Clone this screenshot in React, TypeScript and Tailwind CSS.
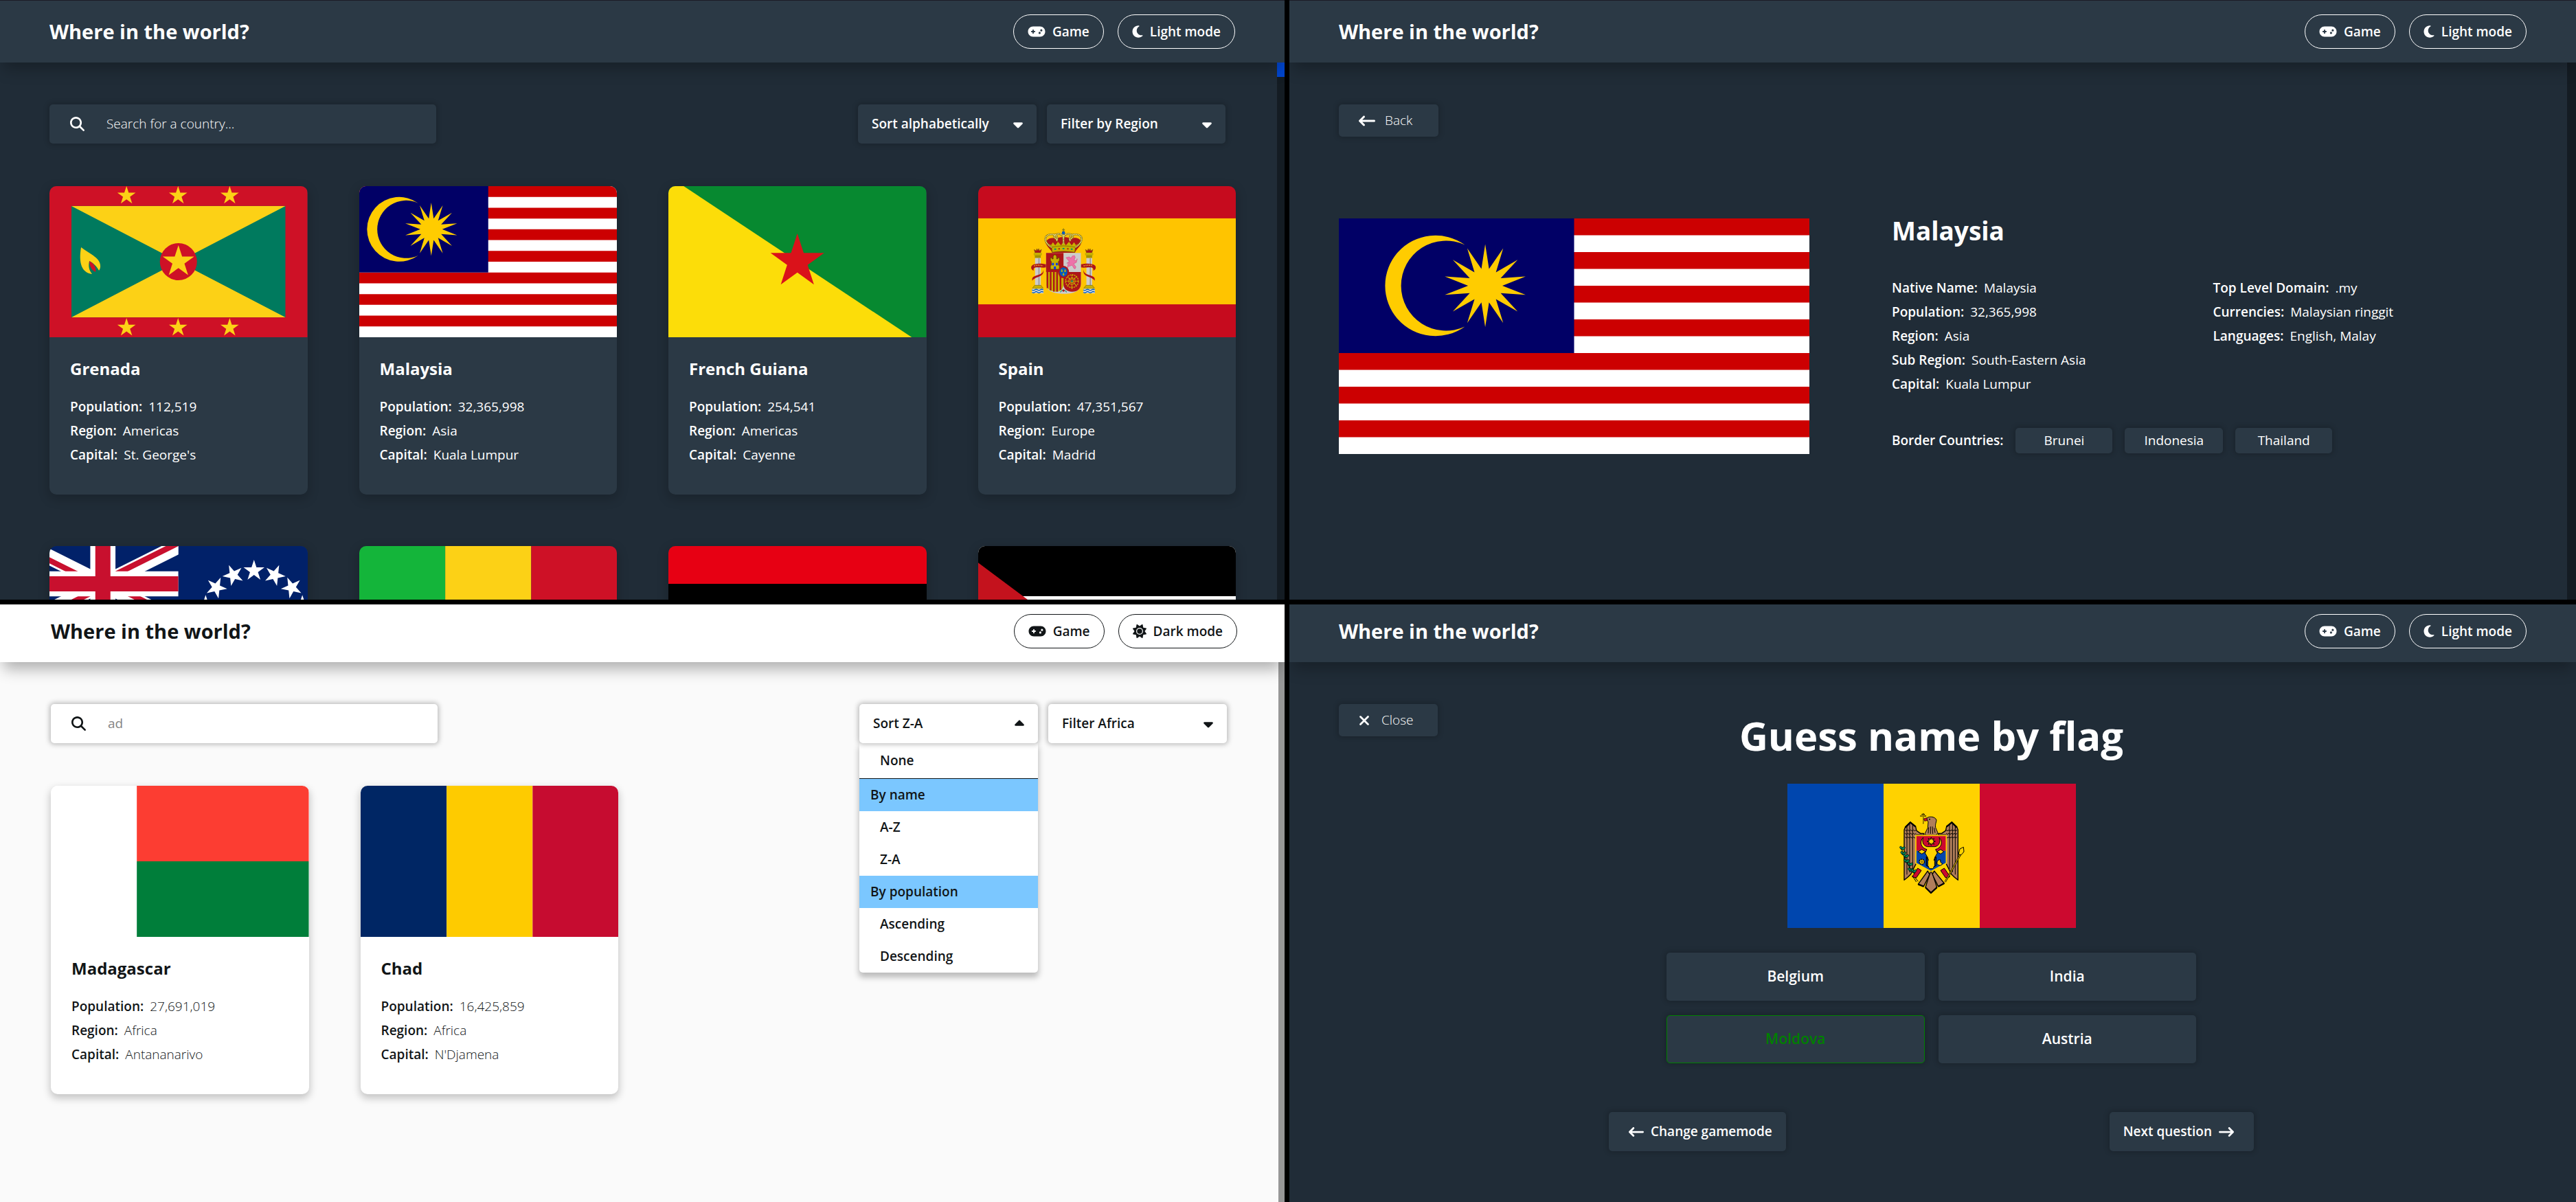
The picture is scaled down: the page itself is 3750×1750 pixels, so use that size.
import type { ReactNode } from "react";
import {
  FaArrowLeftLong,
  FaArrowRightLong,
  FaCaretDown,
  FaCaretUp,
  FaGamepad,
  FaMagnifyingGlass,
  FaMoon,
  FaSun,
  FaXmark,
} from "react-icons/fa6";

/* ---------- geometry helpers ---------- */

function starPoints(cx: number, cy: number, outer: number, inner: number, tips = 5, turn = 0) {
  const pts: string[] = [];
  for (let i = 0; i < tips * 2; i++) {
    const r = i % 2 === 0 ? outer : inner;
    const a = (Math.PI * i) / tips - Math.PI / 2 + (turn * Math.PI) / 180;
    pts.push(`${(cx + r * Math.cos(a)).toFixed(2)},${(cy + r * Math.sin(a)).toFixed(2)}`);
  }
  return pts.join(" ");
}

function Star({ x, y, r, turn = 0, fill }: { x: number; y: number; r: number; turn?: number; fill: string }) {
  return <polygon points={starPoints(x, y, r, r * 0.382, 5, turn)} fill={fill} />;
}

function Flag({ box, label, className, children }: { box: string; label: string; className: string; children: ReactNode }) {
  return (
    <svg viewBox={box} preserveAspectRatio="xMidYMid slice" role="img" aria-label={`Flag of ${label}`} className={className}>
      {children}
    </svg>
  );
}

/* ---------- flags ---------- */

type FlagProps = { className: string };

function Grenada({ className }: FlagProps) {
  return (
    <Flag box="0 0 375 220" label="Grenada" className={className}>
      <rect width="375" height="220" fill="#ce1126" />
      <rect x="32" y="29" width="311" height="162" fill="#007a5e" />
      <path d="M32 29H343L32 191H343Z" fill="#fcd116" />
      <circle cx="187.500" cy="110" r="27" fill="#ce1126" />
      <Star x={187.5} y={110} r={24} fill="#fcd116" />
      {[112, 187, 262].map((x) => (
        <g key={x}>
          <Star x={x} y={14} r={14} fill="#fcd116" />
          <Star x={x} y={206} r={14} fill="#fcd116" />
        </g>
      ))}
      <path d="M46 89C56 97 74 104 74 116C74 120 73 121 72 123C69 117 64 112 58 109C56 117 58 123 62 128C47 126 42 112 46 89Z" fill="#fcd116" />
      <path d="M58 109C66 113 68 120 67 125C62 123 58 117 58 109Z" fill="#ce1126" />
    </Flag>
  );
}

function Malaysia({ className }: FlagProps) {
  return (
    <Flag box="0 0 440 220" label="Malaysia" className={className}>
      <rect width="440" height="220" fill="#fff" />
      <path
        d="M0 7.86H440M0 39.29H440M0 70.71H440M0 102.14H440M0 133.57H440M0 165H440M0 196.43H440"
        stroke="#cc0001"
        strokeWidth="15.71"
      />
      <rect width="220" height="125.710" fill="#010066" />
      <path d="M118 24.700A47 47 0 1 0 118 101A42 42 0 1 1 118 24.700Z" fill="#fc0" />
      <polygon points={starPoints(137, 62.8, 38.7, 16, 14)} fill="#fc0" />
    </Flag>
  );
}

function FrenchGuiana({ className }: FlagProps) {
  return (
    <Flag box="0 0 375 220" label="French Guiana" className={className}>
      <rect width="375" height="220" fill="#078930" />
      <path d="M0 0H22L354 220H0Z" fill="#fcdd09" />
      <Star x={187.5} y={110} r={41} fill="#da121a" />
    </Flag>
  );
}

function Pillar({ x }: { x: number }) {
  return (
    <g>
      <path d={`M${x - 16} 1090l4 14h24l4-14-9 6-3-10-4 8-4-8-3 10z`} fill="#ad1519" stroke="#7a5a10" strokeWidth="2" />
      <rect x={x - 18} y="1104" width="36" height="12" rx="4" fill="#c8b100" />
      <rect x={x - 13} y="1115" width="26" height="12" fill="#a39200" />
      <rect x={x - 12} y="1127" width="25" height="120" fill="#ccc" />
      <path d={`M${x + 5} 1127V1247`} stroke="#999" strokeWidth="5" />
      <path d={`M${x - 14} 1246h28l10 14h-48z`} fill="#c8b100" stroke="#7a6a00" strokeWidth="2" />
      <rect x={x - 25} y="1261" width="50" height="20" fill="#ddd" />
      <path d={`M${x - 25} 1266q6 5 12 0t12 0 12 0 13 0M${x - 25} 1276q6 5 12 0t12 0 12 0 13 0`} stroke="#005bbf" strokeWidth="4" fill="none" />
    </g>
  );
}

function Spain({ className }: FlagProps) {
  return (
    <Flag box="0 0 375 220" label="Spain" className={className}>
      <rect width="375" height="220" fill="#c60b1e" />
      <rect y="47" width="375" height="125" fill="#ffc400" />
      <g transform="scale(.33333) translate(76 -813)">
        <Pillar x={184} />
        <Pillar x={408} />
        <path
          d="M220 1154c-20-4-50-6-62 6-6 8-2 18 8 22-2-10 4-14 14-14 16 0 28 2 40 0zM206 1178c4 8-2 16-18 22-20 6-32 10-28 26 6-10 20-14 34-20 14-8 18-20 12-28z"
          fill="#ad1519"
        />
        <path
          d="M372 1154c20-4 50-6 62 6 6 8 2 18-8 22 2-10-4-14-14-14-16 0-28 2-40 0zM386 1178c-4 8 2 16 18 22 20 6 32 10 28 26-6-10-20-14-34-20-14-8-18-20-12-28z"
          fill="#ad1519"
        />
        <path d="M168 1161q16-5 40 0M384 1161q24-5 40 0" stroke="#e8c22c" strokeWidth="5" strokeDasharray="4 4" fill="none" />
        <path d="M220 1105H372V1238C372 1266 350 1283 296 1283C242 1283 220 1266 220 1238Z" fill="#ccc" />
        <path d="M220 1105H296V1188H220Z" fill="#ad1519" />
        <path d="M220 1188H296V1240C296 1262 284 1274 262 1274C236 1272 220 1260 220 1238Z" fill="#c8b100" />
        <path d="M226 1188V1258M240 1188V1268M254 1188V1273M268 1188V1273M283 1188V1266" stroke="#ad1519" strokeWidth="7" />
        <path d="M296 1188H372V1238C372 1260 358 1274 334 1274C308 1272 296 1260 296 1240Z" fill="#ad1519" />
        <g fill="none" stroke="#c8b100" strokeWidth="4">
          <circle cx="333" cy="1228" r="28" strokeDasharray="7 3" />
          <circle cx="333" cy="1228" r="14" strokeDasharray="4 2" />
          <path d="M305 1228H361M333 1200V1262M313 1208L353 1248M353 1208L313 1248" strokeDasharray="6 2" />
        </g>
        <circle cx="333" cy="1228" r="4" fill="#058e6e" />
        <path
          d="M239 1176v-14l4-4v-16l-4-4v-12h7v5h5v-12l5-6h5l5 6v12h5v-5h7v12l-4 4v16l4 4v14z"
          fill="#c8b100"
          stroke="#4d4200"
          strokeWidth="2"
        />
        <path d="M246 1148h8v11h-8zM263 1148h8v11h-8zM254 1164h9v12h-9z" fill="#0039f0" />
        <path
          d="M308 1126l12-4 8 6 8-10 8-1 3 7-5 12 10 4 4-10-4 16-12 6 10 14-4 8-4-2-8-14-18 6-4 10 4-20 8-6-14 2 12-8z"
          fill="#ed72aa"
          stroke="#db6a96"
          strokeWidth="3"
        />
        <ellipse cx="296" cy="1188" rx="24" ry="27" fill="#ad1519" />
        <ellipse cx="296" cy="1188" rx="17" ry="20" fill="#005bbf" />
        <path d="M289 1176v12M285 1184h8M303 1176v12M299 1184h8M296 1192v12M292 1199h8" stroke="#c8b100" strokeWidth="4" />
        <path d="M282 1276q14-20 28 0" fill="none" stroke="#058e6e" strokeWidth="3" />
        <circle cx="296" cy="1269" r="5" fill="#ad1519" />
        <path d="M246 1104c-2-14-24-26-28-44 4-18 30-26 46-16 12-12 52-12 64 0 16-10 44-4 46 16-4 18-24 30-28 44z" fill="#ad1519" />
        <path d="M248 1084l-20-20 14 6 8-12 10 14 12-16 14 16 10-18 10 18 14-16 12 16 10-14 8 12 14-6-20 20z" fill="#c8b100" />
        <path d="M244 1080q52-12 104 0l-3 22q-50-9-98 0z" fill="#c8b100" stroke="#6b5c00" strokeWidth="2" />
        <path d="M256 1088h8M292 1086h8M328 1088h8" stroke="#058e6e" strokeWidth="6" />
        <path d="M274 1087h6M312 1087h6" stroke="#ad1519" strokeWidth="6" />
        <path
          d="M244 1080c-38-24-34-54-2-56 28-2 30 16 24 30M348 1080c38-24 34-54 2-56-28-2-30 16-24 30M268 1046c-26-14-8-24 8-24 14 0 18 8 20 18 2-10 6-18 20-18 16 0 34 10 8 24M296 1020v44"
          fill="none"
          stroke="#8d7b12"
          strokeWidth="8"
        />
        <path
          d="M244 1080c-38-24-34-54-2-56 28-2 30 16 24 30M348 1080c38-24 34-54 2-56-28-2-30 16-24 30M268 1046c-26-14-8-24 8-24 14 0 18 8 20 18 2-10 6-18 20-18 16 0 34 10 8 24M296 1020v44"
          fill="none"
          stroke="#fff3a0"
          strokeWidth="4"
          strokeDasharray="4 3"
        />
        <circle cx="296" cy="1017" r="7" fill="#005bbf" />
        <path d="M296 998v14M290 1004h12" stroke="#8d7b12" strokeWidth="4" />
      </g>
    </Flag>
  );
}

function CookIslands({ className }: FlagProps) {
  const ring = Array.from({ length: 15 }, (_, i) => i * 24);
  return (
    <Flag box="0 0 440 220" label="Cook Islands" className={className}>
      <rect width="440" height="220" fill="#012169" />
      <svg width="220" height="110" viewBox="0 0 60 30">
        <path d="M0 0L60 30M60 0L0 30" stroke="#fff" strokeWidth="6" />
        <path d="M0 0L30 15H25L0 2.500ZM60 0L30 15V12.500L55 0ZM60 30L30 15H35L60 27.500ZM0 30L30 15V17.500L5 30Z" fill="#c8102e" />
        <path d="M30 0V30M0 15H60" stroke="#fff" strokeWidth="10" />
        <path d="M30 0V30M0 15H60" stroke="#c8102e" strokeWidth="6" />
      </svg>
      {ring.map((deg) => (
        <Star
          key={deg}
          x={330 + 74 * Math.sin((deg * Math.PI) / 180)}
          y={110 - 74 * Math.cos((deg * Math.PI) / 180)}
          r={16}
          turn={deg}
          fill="#fff"
        />
      ))}
    </Flag>
  );
}

function VerticalTricolor({ className, label, colors }: FlagProps & { label: string; colors: string[] }) {
  return (
    <Flag box="0 0 375 220" label={label} className={className}>
      {colors.map((c, i) => (
        <rect key={c} x={i * 125} width="125" height="220" fill={c} />
      ))}
    </Flag>
  );
}

function Libya({ className }: FlagProps) {
  return (
    <Flag box="0 0 440 220" label="Libya" className={className}>
      <rect width="440" height="220" fill="#e70013" />
      <rect y="55" width="440" height="165" fill="#000" />
      <rect y="165" width="440" height="55" fill="#239e46" />
    </Flag>
  );
}

function Palestine({ className }: FlagProps) {
  return (
    <Flag box="0 0 440 220" label="Palestine" className={className}>
      <rect width="440" height="220" fill="#fff" />
      <rect width="440" height="73" fill="#000" />
      <rect y="147" width="440" height="73" fill="#009736" />
      <path d="M0 0L147 110L0 220Z" fill="#c4121d" />
    </Flag>
  );
}

function Madagascar({ className }: FlagProps) {
  return (
    <Flag box="0 0 375 220" label="Madagascar" className={className}>
      <rect width="375" height="220" fill="#fff" />
      <rect x="125" width="250" height="110" fill="#fc3d32" />
      <rect x="125" y="110" width="250" height="110" fill="#007e3a" />
    </Flag>
  );
}

function Wing() {
  return (
    <g>
      <path
        d="M93 364V145L98 132L120 111L143 130L147 148L164 160H178L180 166H146V290L122 338L108 352Z"
        fill="#b07e5b"
        stroke="#000"
        strokeWidth="4"
      />
      <path
        d="M105 130V340M117 120V330M130 122V315M97 145q6 8 12 0 6 8 12 0 6 8 12 0 6 8 12 0M97 160q6 8 12 0 6 8 12 0 6 8 12 0 6 8 12 0M97 176q6 8 12 0 6 8 12 0 6 8 12 0 6 8 12 0"
        fill="none"
        stroke="#000"
        strokeWidth="3"
      />
      <path d="M98 134L120 112L143 131" fill="none" stroke="#000" strokeWidth="7" />
    </g>
  );
}

const oliveLeaves = [
  [84, 228],
  [88, 250],
  [100, 262],
  [102, 284],
  [118, 298],
  [120, 322],
  [134, 328],
];

function Moldova({ className }: FlagProps) {
  return (
    <Flag box="-417 -57 1260 630" label="Moldova" className={className}>
      <rect x="-417" y="-57" width="420" height="630" fill="#0046ae" />
      <rect x="3" y="-57" width="420" height="630" fill="#ffd200" />
      <rect x="423" y="-57" width="420" height="630" fill="#cc092f" />
      <g strokeLinejoin="round">
        <Wing />
        <g transform="translate(421 0) scale(-1 1)">
          <Wing />
        </g>
        <path d="M190 96C196 84 228 84 234 102C232 116 228 120 230 134L240 158L232 168H186L184 160L196 136L198 110Z" fill="#b07e5b" stroke="#000" strokeWidth="3" />
        <path d="M200 134L198 160M208 130V162M216 130L218 162M224 136L228 158" stroke="#000" strokeWidth="3" />
        <path d="M192 92L178 96L182 106L194 104Z" fill="#cc092f" stroke="#000" strokeWidth="2" />
        <circle cx="204" cy="98" r="3" fill="#000" />
        <path d="M176 72V118M163 84H189M169 77H183" stroke="#000" strokeWidth="4" />
        <path d="M176 74V116M165 84H187" stroke="#ffd200" strokeWidth="2" />
        <path d="M196 324L154 382L178 392L204 340ZM224 324L268 378L242 392L216 340Z" fill="#b07e5b" stroke="#000" strokeWidth="4" />
        <path d="M210 322C200 350 192 376 186 396L210 420L236 396C230 376 222 350 210 322Z" fill="#b07e5b" stroke="#000" strokeWidth="4" />
        <path d="M186 396L210 420L236 396M154 382L178 392M268 378L242 392" fill="none" stroke="#000" strokeWidth="7" />
        <path d="M152 312L168 322L146 354L128 350L136 338ZM268 312L252 322L274 354L292 350L286 338Z" fill="#cc092f" stroke="#000" strokeWidth="3" />
        <path d="M128 344L146 372M140 352L154 370M292 344L276 366" stroke="#000" strokeWidth="3" />
        <path d="M80 222C92 260 108 304 138 338" stroke="#000" strokeWidth="3" fill="none" />
        {oliveLeaves.map(([x, y]) => (
          <g key={y}>
            <ellipse cx={x - 5} cy={y} rx="9" ry="5" transform={`rotate(50 ${x} ${y})`} fill="#008f5d" stroke="#000" strokeWidth="2" />
            <ellipse cx={x + 6} cy={y} rx="9" ry="5" transform={`rotate(-30 ${x} ${y})`} fill="#008f5d" stroke="#000" strokeWidth="2" />
          </g>
        ))}
        <path d="M272 372L340 250" stroke="#000" strokeWidth="7" />
        <path d="M272 372L340 250" stroke="#ffd200" strokeWidth="3" />
        <path d="M330 252L336 228L352 220L354 240L342 254Z" fill="#ffd200" stroke="#000" strokeWidth="3" />
        <path d="M144 169H277V236H144Z" fill="#cc092f" />
        <path d="M144 236H277V290L210 326L144 290Z" fill="#0046ae" />
        <path d="M144 169H277V290L210 326L144 290Z" fill="none" stroke="#ffd200" strokeWidth="5" />
        <path
          d="M176 178C158 196 166 224 192 230L184 246C190 256 196 262 196 276V302L204 314H218L226 302V276C226 262 232 256 238 246L230 230C256 224 264 196 246 178C252 198 246 214 228 218H194C176 214 170 198 176 178Z"
          fill="#ffd200"
          stroke="#000"
          strokeWidth="3"
        />
        <path d="M193 262L199 278M229 262L223 278M190 262V300L200 306M232 262V300L222 306" stroke="#000" strokeWidth="4" fill="none" />
        <polygon points={starPoints(211, 195, 18, 9, 8)} fill="#ffd200" stroke="#000" strokeWidth="3" />
        <path d="M154 240L170 230L186 240L170 250ZM236 240L252 230L266 240L252 250Z" fill="#ffd200" stroke="#000" strokeWidth="3" />
        <circle cx="170" cy="284" r="11" fill="#ffd200" stroke="#000" strokeWidth="4" strokeDasharray="7 2" />
        <circle cx="170" cy="284" r="4" fill="#ffd200" stroke="#000" strokeWidth="2" />
        <path d="M252 276A12 12 0 1 0 260 292A13 13 0 0 1 252 276Z" fill="#ffd200" stroke="#000" strokeWidth="3" />
      </g>
    </Flag>
  );
}

/* ---------- shared pieces ---------- */

type Theme = "dark" | "light";

const surface = {
  dark: "bg-[#2b3945] text-white",
  light: "bg-white text-[#111517]",
};

const boxShadow = {
  dark: "shadow-[0_0_7px_2px_rgba(0,0,0,0.18)]",
  light: "shadow-[0_0_7px_2px_rgba(0,0,0,0.25)]",
};

function NavButton({ theme, children }: { theme: Theme; children: ReactNode }) {
  const border = theme === "dark" ? "border-white" : "border-[#111517]";
  return (
    <button type="button" className={`flex h-[50px] items-center gap-[10px] rounded-full border px-5 text-[19px] font-semibold ${border}`}>
      {children}
    </button>
  );
}

function TopBar({ theme, cropped = false }: { theme: Theme; cropped?: boolean }) {
  return (
    <header
      className={`relative z-10 flex items-center justify-between pb-5 ${theme === "dark" ? "px-[72px]" : "pr-[69px] pl-[74px]"} ${
        cropped ? "pt-[14px]" : "border-t border-[#1c1c26] pt-5"
      } ${surface[theme]} ${
        theme === "dark" ? "shadow-[0_15px_20px_-5px_rgba(0,0,0,0.25)]" : "shadow-[0_15px_20px_-5px_rgba(0,0,0,0.3)]"
      }`}
    >
      <a href="#home" className="text-[29px] leading-10 font-bold">
        Where in the world?
      </a>
      <nav className="flex gap-5">
        <NavButton theme={theme}>
          <FaGamepad className="h-5 w-[26px]" />
          Game
        </NavButton>
        <NavButton theme={theme}>
          {theme === "dark" ? <FaMoon className="h-5 w-4" /> : <FaSun className="size-5" />}
          {theme === "dark" ? "Light mode" : "Dark mode"}
        </NavButton>
      </nav>
    </header>
  );
}

function Panel({ theme, label, cropped, track, children }: { theme: Theme; label: string; cropped?: boolean; track?: ReactNode; children: ReactNode }) {
  return (
    <section
      aria-label={label}
      className={`flex min-h-0 min-w-0 flex-col overflow-hidden ${theme === "dark" ? "bg-[#202c37] text-white" : "bg-[#fafafa] text-[#111517]"}`}
    >
      <TopBar theme={theme} cropped={cropped} />
      <div className="flex min-h-0 flex-1">
        <div className={`min-w-0 flex-1 pt-[61px] pr-[60px] ${theme === "dark" ? "pl-[72px]" : "pl-[74px]"}`}>{children}</div>
        {track}
      </div>
    </section>
  );
}

function SearchBox({ theme, value }: { theme: Theme; value?: string }) {
  return (
    <label className={`flex h-[57px] w-[563px] items-center gap-8 rounded-[5px] px-[30px] ${surface[theme]} ${boxShadow[theme]}`}>
      <FaMagnifyingGlass className="size-[21px]" />
      <input
        type="search"
        aria-label="Search for a country"
        placeholder="Search for a country..."
        defaultValue={value}
        className={`min-w-0 flex-1 bg-transparent text-[19px] outline-none ${
          theme === "dark" ? "font-light placeholder:text-white placeholder:opacity-100" : "font-normal text-[#858585]"
        }`}
      />
    </label>
  );
}

function SelectBox({ theme, label, text }: { theme: Theme; label: string; text: string }) {
  return (
    <div className={`relative h-[57px] w-[260px] rounded-[5px] ${surface[theme]} ${boxShadow[theme]}`}>
      <select aria-label={label} className="size-full appearance-none bg-transparent px-5 text-[19px] font-semibold outline-none">
        <option>{text}</option>
      </select>
      <FaCaretDown className="pointer-events-none absolute top-[18px] right-4 size-[22px]" />
    </div>
  );
}

function Field({ name, value, thin = false }: { name: string; value: string; thin?: boolean }) {
  return (
    <div className="flex h-[35px] items-center gap-[9px] text-[19px]">
      <dt className="font-semibold">{name}:</dt>
      <dd className={thin ? "font-light" : "font-normal"}>{value}</dd>
    </div>
  );
}

type Country = { name: string; population: string; region: string; capital: string; flag: (p: FlagProps) => ReactNode };

const worldCountries: Country[] = [
  { name: "Grenada", population: "112,519", region: "Americas", capital: "St. George's", flag: Grenada },
  { name: "Malaysia", population: "32,365,998", region: "Asia", capital: "Kuala Lumpur", flag: Malaysia },
  { name: "French Guiana", population: "254,541", region: "Americas", capital: "Cayenne", flag: FrenchGuiana },
  { name: "Spain", population: "47,351,567", region: "Europe", capital: "Madrid", flag: Spain },
];

const nextRow: { name: string; flag: (p: FlagProps) => ReactNode }[] = [
  { name: "Cook Islands", flag: CookIslands },
  { name: "Mali", flag: (p) => <VerticalTricolor {...p} label="Mali" colors={["#14b53a", "#fcd116", "#ce1126"]} /> },
  { name: "Libya", flag: Libya },
  { name: "Palestine", flag: Palestine },
];

const africanCountries: Country[] = [
  { name: "Madagascar", population: "27,691,019", region: "Africa", capital: "Antananarivo", flag: Madagascar },
  {
    name: "Chad",
    population: "16,425,859",
    region: "Africa",
    capital: "N'Djamena",
    flag: (p) => <VerticalTricolor {...p} label="Chad" colors={["#002664", "#fecb00", "#c60c30"]} />,
  },
];

function cardClass(theme: Theme) {
  return `overflow-hidden rounded-[10px] ${surface[theme]} ${
    theme === "dark" ? "shadow-[0_5px_15px_2px_rgba(0,0,0,0.18)]" : "shadow-[0_5px_12px_1px_rgba(0,0,0,0.22)]"
  }`;
}

function CountryCard({ theme, country }: { theme: Theme; country: Country }) {
  const CountryFlag = country.flag;
  const thin = theme === "light";
  return (
    <article className={cardClass(theme)}>
      <CountryFlag className="block h-[220px] w-full" />
      <div className="px-[30px] pt-[30px] pb-10">
        <h2 className="mb-[22px] text-[24px] leading-8 font-bold">{country.name}</h2>
        <dl>
          <Field name="Population" value={country.population} thin={thin} />
          <Field name="Region" value={country.region} thin={thin} />
          <Field name="Capital" value={country.capital} thin={thin} />
        </dl>
      </div>
    </article>
  );
}

function ActionButton({ className, children }: { className: string; children: ReactNode }) {
  return (
    <button type="button" className={`flex items-center rounded-[5px] ${surface.dark} ${boxShadow.dark} ${className}`}>
      {children}
    </button>
  );
}

/* ---------- screens ---------- */

function BrowseScreen() {
  const track = (
    <div className="w-[11px] bg-[#141c23]">
      <div className="h-[21px] bg-[#0045cd]" />
    </div>
  );
  return (
    <Panel theme="dark" label="All countries" track={track}>
      <div className="mb-[62px] flex justify-between pr-[15px]">
        <SearchBox theme="dark" />
        <div className="flex gap-[15px]">
          <SelectBox theme="dark" label="Sort" text="Sort alphabetically" />
          <SelectBox theme="dark" label="Region" text="Filter by Region" />
        </div>
      </div>
      <div className="grid grid-cols-4 gap-[75px]">
        {worldCountries.map((c) => (
          <CountryCard key={c.name} theme="dark" country={c} />
        ))}
        {nextRow.map(({ name, flag: RowFlag }) => (
          <article key={name} className={cardClass("dark")}>
            <RowFlag className="block h-[220px] w-full" />
          </article>
        ))}
      </div>
    </Panel>
  );
}

function DetailScreen() {
  return (
    <Panel theme="dark" label="Malaysia" track={<div className="w-[13px] bg-[#141c23]" />}>
      <ActionButton className="h-[47px] w-[145px] gap-[14px] pl-[29px] text-[19px] font-light">
        <FaArrowLeftLong className="size-6" />
        Back
      </ActionButton>
      <div className="mt-[119px] flex gap-[120px]">
        <Malaysia className="block h-[343px] w-[685px] shrink-0" />
        <div className="min-w-0 flex-1">
          <h1 className="mb-12 text-[37px] leading-9 font-bold">Malaysia</h1>
          <div className="grid grid-cols-2 gap-3">
            <dl>
              <Field name="Native Name" value="Malaysia" />
              <Field name="Population" value="32,365,998" />
              <Field name="Region" value="Asia" />
              <Field name="Sub Region" value="South-Eastern Asia" />
              <Field name="Capital" value="Kuala Lumpur" />
            </dl>
            <dl>
              <Field name="Top Level Domain" value=".my" />
              <Field name="Currencies" value="Malaysian ringgit" />
              <Field name="Languages" value="English, Malay" />
            </dl>
          </div>
          <div className="mt-[46px] flex items-center gap-[18px]">
            <h2 className="text-[19px] font-semibold">Border Countries:</h2>
            {["Brunei", "Indonesia", "Thailand"].map((n) => (
              <ActionButton key={n} className="h-[37px] min-w-[141px] justify-center px-7 text-[19px]">
                {n}
              </ActionButton>
            ))}
          </div>
        </div>
      </div>
    </Panel>
  );
}

const sortGroups = [
  { title: "By name", items: ["A-Z", "Z-A"] },
  { title: "By population", items: ["Ascending", "Descending"] },
];

function SearchScreen() {
  return (
    <Panel theme="light" label="Search results" cropped track={<div className="w-[9px] bg-[#979797]" />}>
      <div className="mb-[62px] flex justify-between pr-[15px]">
        <SearchBox theme="light" value="ad" />
        <div className="flex gap-[15px]">
          <div className="relative">
            <button
              type="button"
              aria-haspopup="listbox"
              aria-expanded="true"
              className={`relative z-10 flex h-[57px] w-[260px] items-center justify-between rounded-[5px] pr-4 pl-5 text-[19px] font-semibold ${surface.light} ${boxShadow.light}`}
            >
              Sort Z-A
              <FaCaretUp className="size-[22px]" />
            </button>
            <ul
              role="listbox"
              aria-label="Sort"
              className="absolute top-[57px] left-0 w-full overflow-hidden rounded-b-[5px] bg-white text-[19px] font-semibold shadow-[0_6px_8px_1px_rgba(0,0,0,0.25)]"
            >
              <li role="option" aria-selected="false" className="flex h-[52px] items-center border-b border-[#111517] pl-[30px]">
                None
              </li>
              {sortGroups.map((g) => (
                <li key={g.title} role="group" aria-label={g.title}>
                  <div className="flex h-[47px] items-center bg-[#7bc7ff] pl-4">{g.title}</div>
                  {g.items.map((item) => (
                    <div key={item} role="option" aria-selected={item === "Z-A"} className="flex h-[47px] items-center pl-[30px]">
                      {item}
                    </div>
                  ))}
                </li>
              ))}
            </ul>
          </div>
          <SelectBox theme="light" label="Region" text="Filter Africa" />
        </div>
      </div>
      <div className="grid grid-cols-4 gap-[75px]">
        {africanCountries.map((c) => (
          <CountryCard key={c.name} theme="light" country={c} />
        ))}
      </div>
    </Panel>
  );
}

function GameScreen() {
  return (
    <Panel theme="dark" label="Game" cropped track={<div className="w-4" />}>
      <div className="grid">
        <ActionButton className="col-start-1 row-start-1 h-[47px] w-[144px] gap-[14px] pl-[26px] text-[19px] font-light">
          <FaXmark className="size-[22px]" />
          Close
        </ActionButton>
        <div className="col-start-1 row-start-1 flex flex-col items-center justify-self-center pt-[10px]">
          <h1 className="mb-[34px] text-[58px] leading-[72px] font-bold">Guess name by flag</h1>
          <Moldova className="block h-[210px] w-[420px]" />
          <div className="mt-9 grid w-[771px] grid-cols-2 gap-x-5 gap-y-[21px]">
            {["Belgium", "India", "Moldova", "Austria"].map((n) => (
              <ActionButton
                key={n}
                className={`h-[70px] justify-center text-[21px] font-semibold ${n === "Moldova" ? "border border-[#008000] text-[#008000]!" : ""}`}
              >
                {n}
              </ActionButton>
            ))}
          </div>
          <div className="mt-[71px] flex w-[939px] justify-between">
            <ActionButton className="h-[57px] gap-[10px] pr-5 pl-[29px] text-[19px] font-semibold">
              <FaArrowLeftLong className="size-[22px]" />
              Change gamemode
            </ActionButton>
            <ActionButton className="h-[57px] gap-[10px] pr-[29px] pl-5 text-[19px] font-semibold">
              Next question
              <FaArrowRightLong className="size-[22px]" />
            </ActionButton>
          </div>
        </div>
      </div>
    </Panel>
  );
}

export default function App() {
  return (
    <main className="grid h-screen grid-cols-[1870fr_1873fr] grid-rows-[873fr_870fr] gap-[7px] bg-black font-['Open_Sans',sans-serif]">
      <BrowseScreen />
      <DetailScreen />
      <SearchScreen />
      <GameScreen />
    </main>
  );
}
